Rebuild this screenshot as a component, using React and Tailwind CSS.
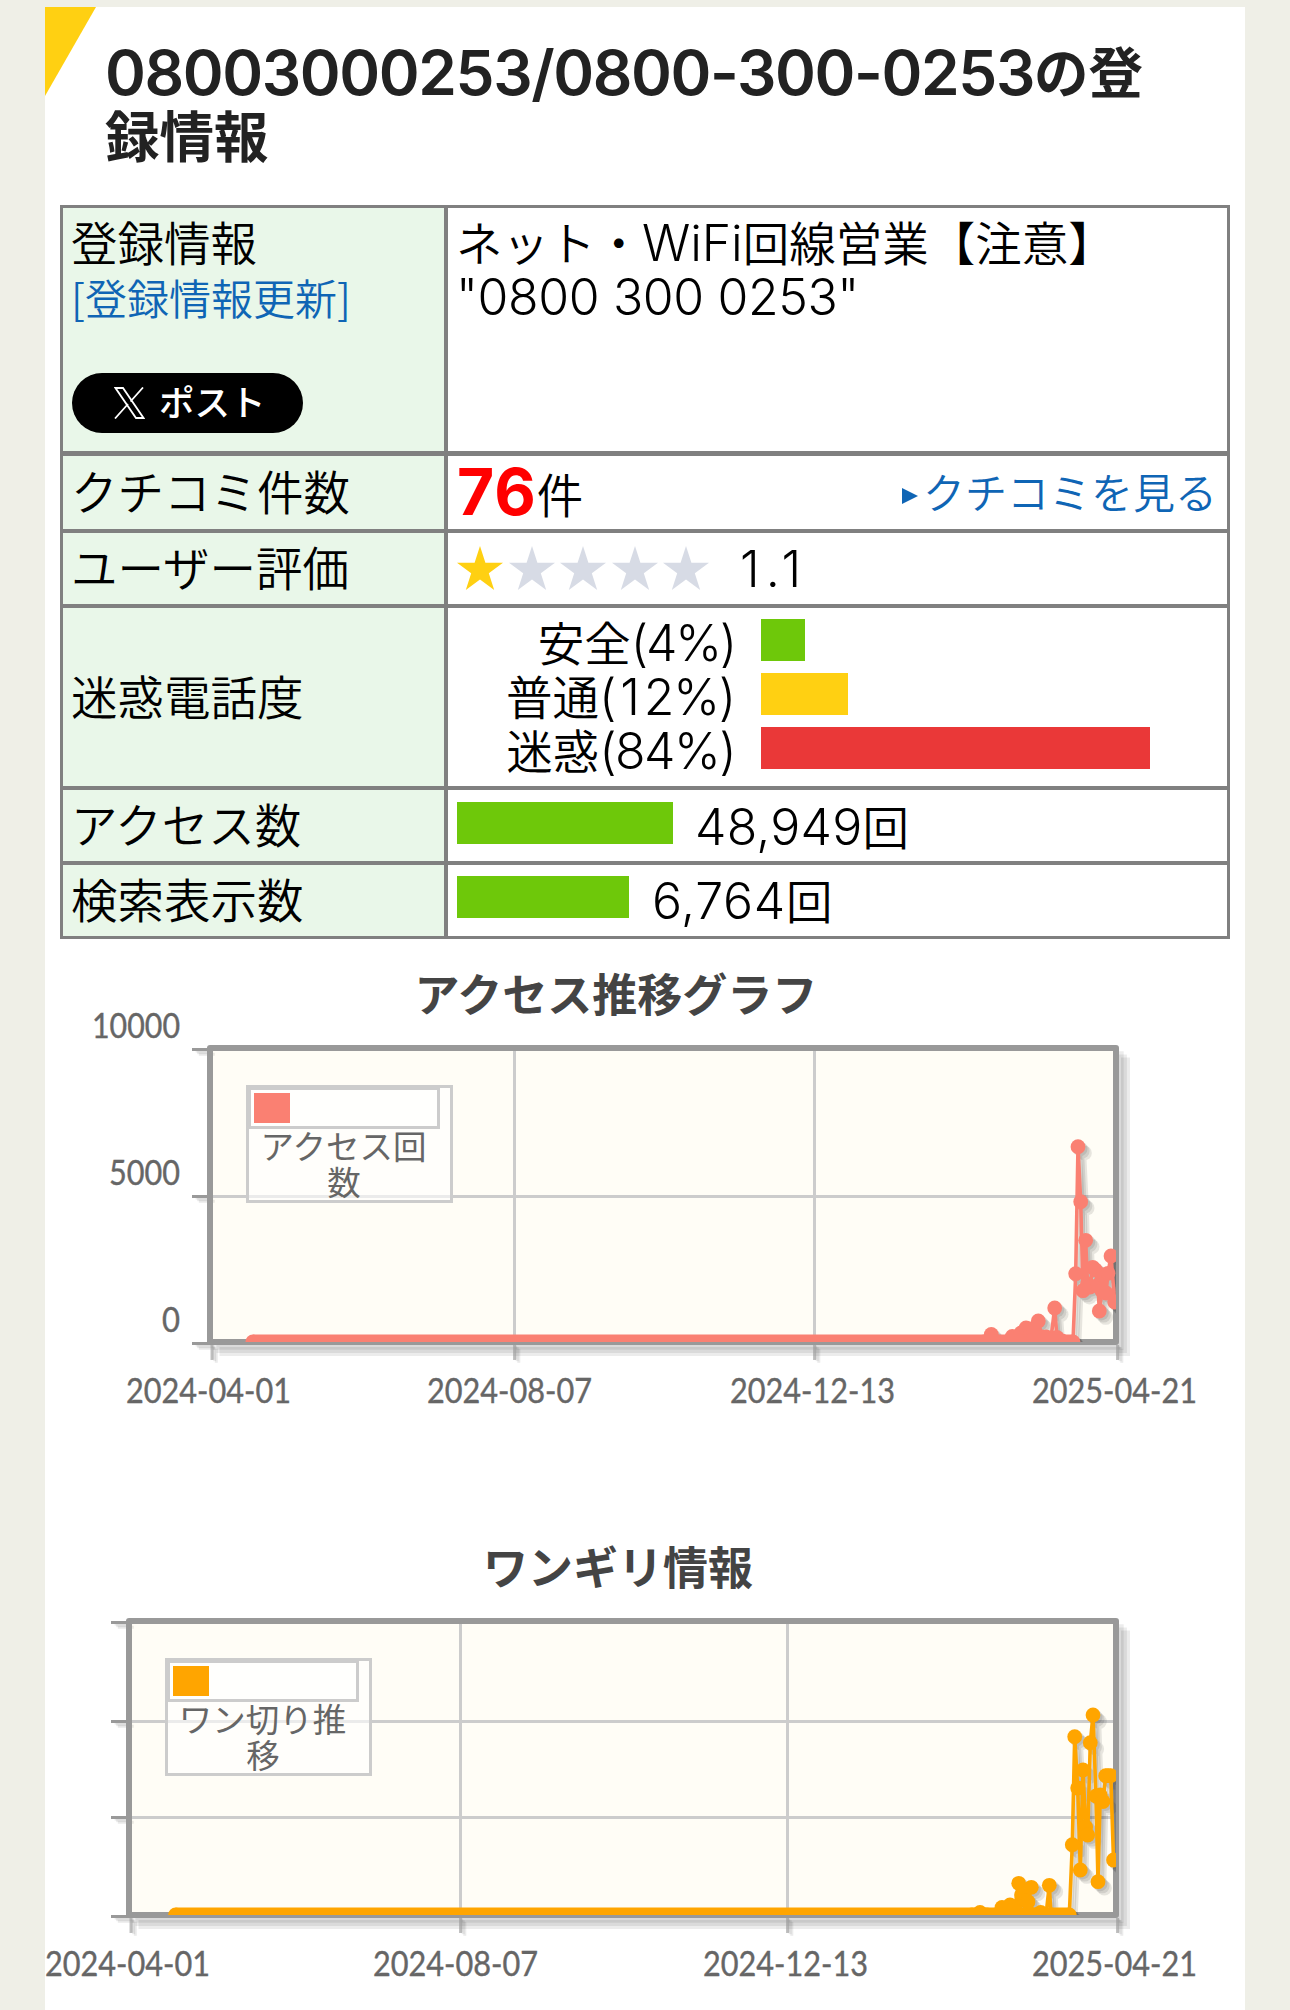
const CJK = "font-['Noto_Sans_CJK_JP',sans-serif]";

const accessPoints = [
  [252.8, 1342], [984, 1342], [991.3, 1334.5], [996, 1342], [1007, 1342], [1012.3, 1336.5], [1016, 1338],
  [1021, 1333], [1026, 1328], [1030, 1329], [1033.5, 1331], [1038.3, 1321], [1042, 1337], [1046, 1337],
  [1051, 1338], [1054.7, 1308], [1057, 1337.5], [1062, 1341], [1073, 1342], [1075.7, 1273.7],
  [1078, 1146.7], [1080.7, 1201.7], [1083, 1290.7], [1085.7, 1240.3], [1087.5, 1284], [1090, 1287],
  [1092.7, 1267.3], [1095.5, 1270], [1098, 1285], [1099.3, 1311], [1102, 1291], [1103, 1275],
  [1106, 1293], [1108, 1273.3], [1111, 1256], [1114.7, 1302],
];

const missedPoints = [
  [175.5, 1342], [972, 1342], [980, 1339.5], [987, 1342], [996, 1342], [1002, 1334.5], [1010, 1332], [1015, 1334],
  [1018.7, 1310.3], [1021.5, 1322], [1026, 1328], [1031.3, 1314.3], [1028, 1328.7], [1036, 1342], [1040.7, 1339.5],
  [1046, 1342], [1049.3, 1312.3], [1051, 1342], [1069.3, 1342], [1072.3, 1271.7], [1074.7, 1163.7],
  [1077.7, 1215], [1080.3, 1297], [1083, 1197], [1085.7, 1254], [1087.7, 1262], [1090.3, 1169.7],
  [1093, 1142], [1096, 1223], [1098, 1308.7], [1100.2, 1222], [1103, 1228.5], [1105.7, 1202.7],
  [1108, 1202.7], [1110.8, 1202.7], [1113.5, 1287],
];

function Series({ points, color }) {
  return (
    <g fill={color} stroke={color}>
      <polyline points={points.map((p) => p.join(",")).join(" ")} fill="none" strokeWidth="3.6" strokeLinejoin="round" />
      {points.map(([x, y], i) => (
        <circle key={i} cx={x} cy={y} r="7.4" stroke="none" />
      ))}
      <line x1={points[0][0]} x2={points[18][0]} y1="1342" y2="1342" strokeWidth="15" />
    </g>
  );
}

function Chart({ id, left, rows, cols, yLabels, xLabels, points, color, legend }) {
  const lx = left + 36;
  return (
    <svg className="block font-[Lato,'Noto_Sans_CJK_JP',sans-serif]" width="1200" height="420" viewBox="45 1005 1200 420">
      <defs>
        <clipPath id={id}>
          <rect x={left} y="1048" width={1116 - left} height="294" />
        </clipPath>
      </defs>
      {[3.2, 6.4, 9.5].map((d) => (
        <path key={d} d={`M${left + d} ${1342 + d}H${1116 + d}V${1048 + d}`} fill="none" stroke="#000" strokeOpacity=".075" strokeWidth="9" />
      ))}
      <rect x={left} y="1048" width={1116 - left} height="294" fill="#fffdf6" />
      <g stroke="#ccc" strokeWidth="3">
        {rows.slice(1, -1).map((y) => (
          <line key={y} x1={left} x2="1116" y1={y} y2={y} />
        ))}
        {cols.slice(1, -1).map((x) => (
          <line key={x} x1={x} x2={x} y1="1048" y2="1342" />
        ))}
      </g>
      {[1.6, 3.2, 4.8].map((d) => (
        <g key={d} stroke="#000" strokeOpacity=".08" strokeWidth="3">
          {rows.map((y) => (
            <line key={y} x1={left - 16 + d} x2={left + d} y1={y + d} y2={y + d} />
          ))}
          {cols.map((x) => (
            <line key={x} x1={x + d - 0.5} x2={x + d - 0.5} y1={1344 + d} y2={1358 + d} />
          ))}
        </g>
      ))}
      <g stroke="#999" strokeWidth="3">
        {rows.map((y) => (
          <line key={y} x1={left - 18} x2={left} y1={y} y2={y} />
        ))}
      </g>
      <g stroke="#999" strokeOpacity=".6" strokeWidth="3">
        {cols.map((x) => (
          <line key={x} x1={x} x2={x} y1="1345" y2="1360" />
        ))}
      </g>
      <rect x={left} y="1048" width={1116 - left} height="294" fill="none" stroke="#999" strokeWidth="6" strokeLinejoin="round" />
      <g clipPath={`url(#${id})`}>
        {[2.1, 4.2, 6.4].map((d) => (
          <g key={d} opacity=".09" transform={`translate(${d} ${d})`}>
            <Series points={points} color="#000" />
          </g>
        ))}
        <Series points={points} color={color} />
      </g>
      <g fill="#fff" fillOpacity=".6" stroke="#ccc" strokeWidth="3">
        <rect x={lx + 1.5} y="1086.5" width="204" height="115" />
        <rect x={lx + 3.5} y="1088.5" width="189" height="39" />
      </g>
      <rect x={lx + 8} y="1093" width="36" height="30" fill={color} />
      <g fill="#666" fontSize="33.5" textAnchor="middle">
        <text x={lx + 97.5} y="1158.5">{legend[0]}</text>
        <text x={lx + 98} y="1194.5">{legend[1]}</text>
      </g>
      <g fill="#666" stroke="#666" strokeWidth=".4" fontSize="34.5">
        {yLabels.map(([text, x, y, w]) => (
          <text key={text} x={x} y={y} textLength={w} lengthAdjust="spacingAndGlyphs">{text}</text>
        ))}
        {xLabels.map(([text, x]) => (
          <text key={text} x={x} y="1403" textLength="165" lengthAdjust="spacingAndGlyphs">{text}</text>
        ))}
      </g>
    </svg>
  );
}

function Num({ className = "tracking-[0.2px]", children }) {
  return <span className={`font-[Inter] text-[50px] leading-[0] font-[350] whitespace-pre ${className}`}>{children}</span>;
}

function Row({ label, height, children }) {
  return (
    <div className={`flex border-[#808080] ${height}`}>
      <div className="flex w-[385px] shrink-0 items-center border-r-4 border-[#808080] bg-[#e9f7e9] pb-[5px] pl-[8px]">{label}</div>
      <div className="min-w-0 flex-1 pl-[9px]">{children}</div>
    </div>
  );
}

function Star({ on }) {
  return (
    <svg width="46" height="44" viewBox="0 0 46 44" className={on ? "fill-[#ffd012]" : "fill-[#d7dbe5]"}>
      <path d="M23 0L28.4 16.8H46L31.8 27.2L37.2 44L23 33.6L8.8 44L14.2 27.2L0 16.8H17.6Z" />
    </svg>
  );
}

const levels = [
  ["安全", "(4%)", "tracking-[-2.2px]", "w-[44px] bg-[#6ec80a]"],
  ["普通", <>(<span className="px-[5px]">1</span>2%)</>, "tracking-[-1.2px]", "w-[87px] bg-[#ffd012]"],
  ["迷惑", "(84%)", "tracking-[-1.6px]", "w-[389px] bg-[#ea3838]"],
];

export default function App() {
  return (
    <div className={`min-h-[2010px] w-[1290px] bg-[#efefe7] pt-[7px] pl-[45px] text-black ${CJK}`}>
      <main className="relative min-h-[2003px] w-[1200px] bg-white">
        <div className="absolute top-0 left-0 h-[89px] w-[51px] bg-[#ffd012] [clip-path:polygon(0_0,100%_0,0_100%)]" />
        <h1 className="h-[198px] pt-[31px] pr-[50px] pl-[60px] text-[54.5px] leading-[64px] font-bold text-[#222]">
          <span className="align-[-2px] font-[Inter] text-[62px] leading-[0] font-semibold tracking-[-1.4px] whitespace-nowrap">08003000253/0800-300-0253</span>の登録情報
        </h1>

        <section className="mx-[15px] border-[3px] border-[#808080] text-[46.5px] leading-[54px] font-[350]">
          <Row
            height="h-[248px] border-b-5"
            label={
              <div className="h-full w-full pt-[6px]">
                <div>登録情報</div>
                <a className="block pt-[2px] text-[42px] text-[#0f65b5]">[登録情報更新]</a>
                <button className="mt-[49px] ml-[1px] flex h-[60px] w-[231px] items-center rounded-[30px] bg-black pl-[42px] text-[35.5px] font-medium text-white">
                  <svg width="31" height="32" viewBox="0 0 31 32" fill="none" stroke="currentColor" strokeWidth="1.8">
                    <path d="M1.5 1H9L29.5 31H22ZM29 0.5L16.5 14.5M1 31.5L14 17" />
                  </svg>
                  <span className="ml-[14px] pb-[4px]">ポスト</span>
                </button>
              </div>
            }
          >
            <div className="-ml-[1px] pt-[6px]">
              <div>ネット・<Num className="tracking-[-0.1px]">WiFi</Num>回線営業【注意】</div>
              <div><Num className="tracking-[-0.4px]">"0800 300 0253"</Num></div>
            </div>
          </Row>
          <Row height="h-[77px] border-b-4" label="クチコミ件数">
            <div className="flex h-full items-center justify-between pr-[10px] pb-[3px]">
              <div className="pt-[3px]">
                <span className="align-[-2px] font-[Inter] text-[64px] leading-[0] font-bold tracking-[1px] text-[#f00]">76</span>件
              </div>
              <a className="flex items-center text-[42px] text-[#0f65b5]">
                <svg width="16" height="16" viewBox="0 0 16 16" className="mt-[10px] mr-[5px] fill-[#0f65b5]"><path d="M0 0L16 8L0 16Z" /></svg>
                クチコミを見る
              </a>
            </div>
          </Row>
          <Row height="h-[75px] border-b-4" label="ユーザー評価">
            <div className="flex h-full items-center">
              <div className="-mt-[1px] flex gap-[5.5px]">
                {[1, 0, 0, 0, 0].map((on, i) => <Star key={i} on={on} />)}
              </div>
              <div className="-mt-[3px] ml-[31px]"><Num className="tracking-[6px]">1.1</Num></div>
            </div>
          </Row>
          <Row height="h-[182px] border-b-4" label="迷惑電話度">
            <div className="pt-[6px]">
              {levels.map(([name, pct, tracking, bar]) => (
                <div key={name} className="flex h-[54px]">
                  <div className="w-[278px] text-right whitespace-nowrap">{name}<Num className={tracking}>{pct}</Num></div>
                  <div className={`mt-[5px] ml-[26px] h-[42px] ${bar}`} />
                </div>
              ))}
            </div>
          </Row>
          <Row height="h-[75px] border-b-4" label="アクセス数">
            <div className="flex pt-[8px]">
              <div className="mt-[4px] mr-[22px] h-[42px] w-[216px] bg-[#6ec80a]" />
              <div><Num>48,949</Num>回</div>
            </div>
          </Row>
          <Row height="h-[71px]" label="検索表示数">
            <div className="flex pt-[7px]">
              <div className="mt-[4px] mr-[23px] h-[42px] w-[172px] bg-[#6ec80a]" />
              <div><Num className="tracking-[0.7px]">6,764</Num>回</div>
            </div>
          </Row>
        </section>

        <section className="h-[573px]">
          <h2 className="h-[66px] w-[1142px] pt-[24px] text-center text-[45px] leading-[60px] font-bold text-[#444]">アクセス推移グラフ</h2>
          <Chart
            id="plot-access"
            left={210}
            rows={[1049.5, 1196.5, 1343.5]}
            cols={[212, 514.5, 814.5, 1117.5]}
            yLabels={[["10000", 92, 1038, 88], ["5000", 109, 1185, 71], ["0", 162, 1332, 18]]}
            xLabels={[["2024-04-01", 126], ["2024-08-07", 427], ["2024-12-13", 730], ["2025-04-21", 1032]]}
            points={accessPoints}
            color="#fa8072"
            legend={["アクセス回", "数"]}
          />
        </section>
        <section>
          <h2 className="h-[66px] w-[1146px] pt-[24px] text-center text-[45px] leading-[60px] font-bold text-[#444]">ワンギリ情報</h2>
          <Chart
            id="plot-missed"
            left={129}
            rows={[1049.5, 1148.5, 1244.5, 1343.5]}
            cols={[131, 460.5, 787.5, 1117.5]}
            yLabels={[]}
            xLabels={[["2024-04-01", 45], ["2024-08-07", 373], ["2024-12-13", 703], ["2025-04-21", 1032]]}
            points={missedPoints}
            color="#ffa500"
            legend={["ワン切り推", "移"]}
          />
        </section>
      </main>
    </div>
  );
}
